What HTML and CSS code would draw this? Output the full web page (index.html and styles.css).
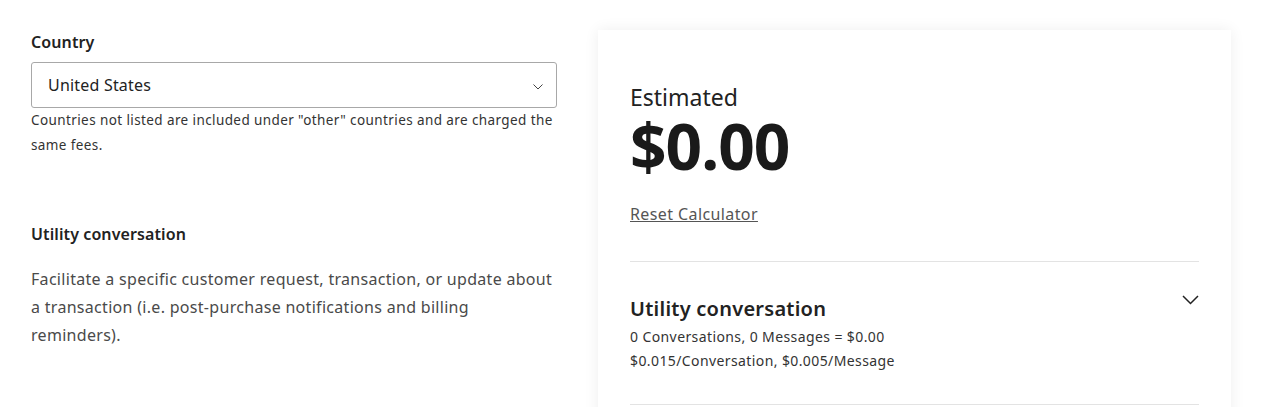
FILE: index.html
```html
<!DOCTYPE html>
<html>
<head>
<meta charset="utf-8">
<link rel="stylesheet" href="styles.css">
</head>
<body>
<div class="page">
  <div class="left">
    <label class="label">Country</label>
    <div class="select">
      <span>United States</span>
      <svg class="sel-chev" width="10" height="6" viewBox="0 0 10 6"><path d="M0.5 0.5 L5 5 L9.5 0.5" fill="none" stroke="#444" stroke-width="1"/></svg>
    </div>
    <p class="help">Countries not listed are included under "other" countries and are charged the same fees.</p>
    <h3 class="label section">Utility conversation</h3>
    <p class="desc">Facilitate a specific customer request, transaction, or update about a transaction (i.e. post-purchase notifications and billing reminders).</p>
  </div>
  <div class="card">
    <div class="est">Estimated</div>
    <div class="amount">$0.00</div>
    <a class="reset" href="#">Reset Calculator</a>
    <div class="item">
      <div class="item-text">
        <div class="item-title">Utility conversation</div>
        <div class="item-line">0 Conversations, 0 Messages = $0.00</div>
        <div class="item-line">$0.015/Conversation, $0.005/Message</div>
      </div>
      <svg class="item-chev" width="17" height="10" viewBox="0 0 17 10"><path d="M1 1 L8.5 8.5 L16 1" fill="none" stroke="#222" stroke-width="1.5"/></svg>
    </div>
  </div>
</div>
</body>
</html>
```
FILE: styles.css
```css
* { box-sizing: border-box; }
body {
  margin: 0;
  font-family: "Noto Sans", "Open Sans", sans-serif;
  color: #222;
  background: #fff;
}
.page {
  display: flex;
  padding: 30px 0 0 31px;
  gap: 41px;
}
.left {
  width: 526px;
  display: flex;
  flex-direction: column;
}
.label {
  font-size: 16px;
  font-weight: 600;
  margin: 0;
  line-height: 24px;
  letter-spacing: 0.1px;
  color: #222;
}
.select {
  margin-top: 8px;
  width: 526px;
  height: 46px;
  border: 1px solid #a8a8a8;
  border-radius: 3px;
  display: flex;
  align-items: center;
  justify-content: space-between;
  padding: 0 13px 0 16px;
  font-size: 16px;
  letter-spacing: 0.2px;
  color: #222;
}
.sel-chev { margin-top: 3px; }
.help {
  margin: 0;
  font-size: 13.5px;
  line-height: 25px;
  letter-spacing: 0.4px;
  color: #333;
}
.section { margin-top: 64px; }
.desc {
  margin: 19px 0 0;
  font-size: 16px;
  line-height: 28px;
  letter-spacing: 0.3px;
  color: #4a4a4a;
}
.card {
  width: 633px;
  height: 420px;
  padding: 52px 32px 0;
  background: #fff;
  box-shadow: 0 0 14px rgba(0,0,0,0.07);
}
.est {
  font-size: 23px;
  line-height: 30px;
  color: #222;
}
.amount {
  margin-top: 3px;
  font-size: 64px;
  font-weight: 700;
  line-height: 62px;
  color: #1a1a1a;
  letter-spacing: -1px;
}
.reset {
  display: inline-block;
  margin-top: 26px;
  font-size: 16px;
  letter-spacing: 0.4px;
  color: #555;
  text-decoration: underline;
  line-height: 22px;
}
.item {
  margin-top: 36px;
  border-top: 1px solid #e3e3e3;
  border-bottom: 1px solid #e3e3e3;
  padding: 33px 0 31px;
  display: flex;
  justify-content: space-between;
  align-items: flex-start;
}
.item-title {
  font-size: 20px;
  font-weight: 600;
  line-height: 28px;
  letter-spacing: 0.25px;
  color: #222;
  margin-bottom: 2px;
}
.item-line {
  font-size: 14px;
  line-height: 24px;
  letter-spacing: 0.4px;
  color: #333;
}
.item-chev { margin-top: 0; }
```
